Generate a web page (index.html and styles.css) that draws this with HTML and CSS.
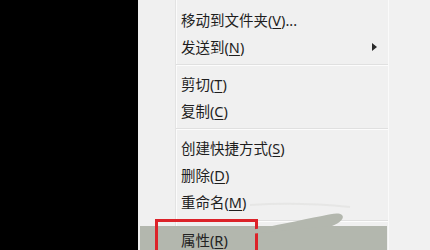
FILE: index.html
```html
<!DOCTYPE html>
<html lang="zh-CN">
<head>
<meta charset="utf-8">
<title>右键菜单</title>
<link rel="stylesheet" href="styles.css">
</head>
<body>
<div class="screen">
  <div class="desk"></div>
  <div class="menu">
    <div class="item">移动到文件夹(<u>V</u>)...</div>
    <div class="item">发送到(<u>N</u>)<span class="arrow"></span></div>
    <div class="sep"></div>
    <div class="item">剪切(<u>T</u>)</div>
    <div class="item">复制(<u>C</u>)</div>
    <div class="sep"></div>
    <div class="item">创建快捷方式(<u>S</u>)</div>
    <div class="item">删除(<u>D</u>)</div>
    <div class="item">重命名(<u>M</u>)</div>
    <div class="sep sep-last"></div>
    <div class="item item-hot">属性(<u>R</u>)<span class="mark"></span></div>
  </div>
  <div class="side"></div>
  <svg class="smear" width="430" height="250" viewBox="0 0 430 250">
    <path d="M250 230 C275 226 300 220 322 216 C332 214 338 212 342 215 C345 218 340 223 332 226 L300 229 L250 234 Z" fill="#b3b7ae"/>
    <path d="M250 205 C280 203 320 204 350 207" stroke="#e4e4e2" stroke-width="2" fill="none" opacity="0.8"/>
  </svg>
</div>
</body>
</html>
```
FILE: styles.css
```css
html, body {
  margin: 0;
  padding: 0;
  background: #000;
}
.screen {
  position: relative;
  display: flex;
  width: 430px;
  height: 250px;
  overflow: hidden;
  background: #000;
  font-family: "Noto Sans", "Noto Sans CJK SC", sans-serif;
  font-size: 14.5px;
  color: #1e1e1e;
}
.desk {
  width: 138px;
  flex: none;
  background: #000;
}
.menu {
  position: relative;
  width: 250px;
  flex: none;
  padding-top: 6px;
  background: linear-gradient(to right,
    #f0f0f0 0, #f0f0f0 37px,
    #e3e3e3 37px, #e3e3e3 38px,
    #fbfbfb 38px, #fbfbfb 39px,
    #f0f0f0 39px);
}
.side {
  flex: 1;
  background: #f1f1f1;
  border-left: 1px solid #fafafa;
}
.item {
  display: flex;
  align-items: center;
  height: 27px;
  padding-left: 43px;
  white-space: nowrap;
}
.item u {
  text-decoration-thickness: 1px;
  text-underline-offset: 2px;
}
.arrow {
  margin-left: auto;
  margin-right: 11px;
  width: 0;
  height: 0;
  border-top: 4px solid transparent;
  border-bottom: 4px solid transparent;
  border-left: 5px solid #2a2a2a;
}
.sep {
  height: 10px;
  margin-left: 38px;
  display: flex;
  flex-direction: column;
  justify-content: center;
}
.sep::before {
  content: "";
  display: block;
  height: 1px;
  background: #e0e0e0;
  border-bottom: 1px solid #fcfcfc;
}
.sep + .item + .item + .item + .sep {
  height: 11px;
}
.sep-last {
  height: 11px;
}
.item-hot {
  position: relative;
  margin: 0 1px 0 2px;
  padding-left: 41px;
  background: #b3b7ae;
  color: #222;
}
.mark {
  position: absolute;
  left: 15px;
  top: -7px;
  width: 97px;
  height: 40px;
  border: 3px solid #dc2229;
}
.smear {
  position: absolute;
  left: 0;
  top: 0;
  pointer-events: none;
}
```
